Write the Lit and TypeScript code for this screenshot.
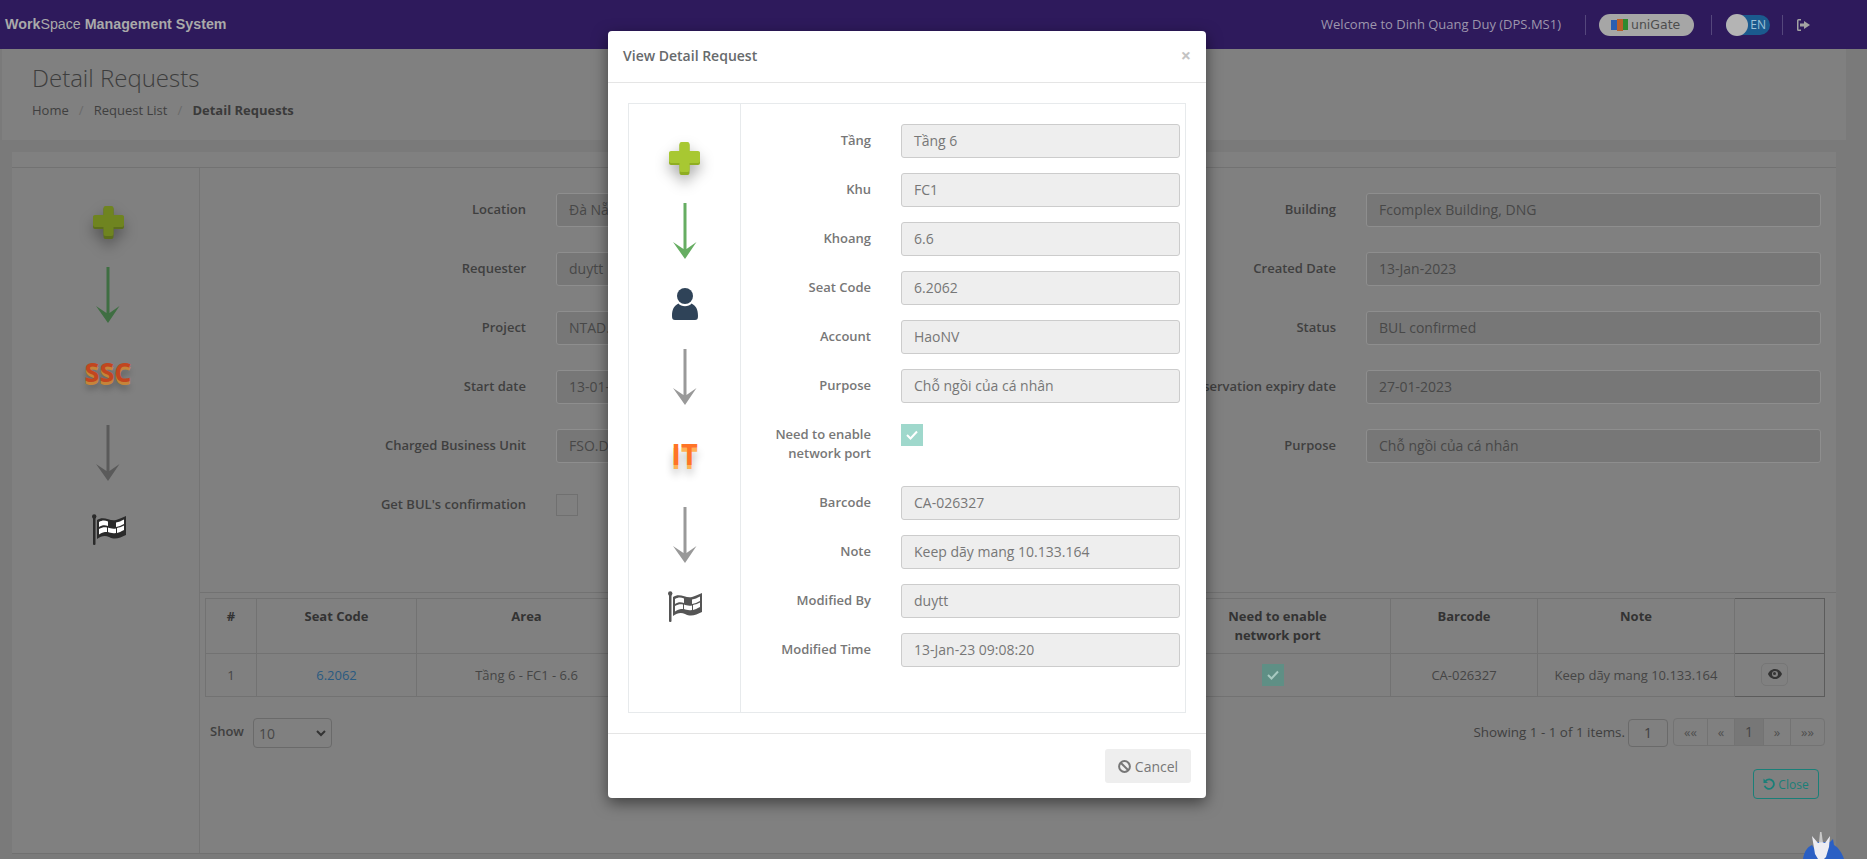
import { LitElement, html, svg, css } from 'lit';
import { customElement } from 'lit/decorators.js';

const plusIcon = (top: string, side: string) => html`
  <svg class="plus" width="31" height="33" viewBox="0 0 31 33">
    <path fill=${side} d="M10.500 3 a2 2 0 0 1 2-2 h6 a2 2 0 0 1 2 2 v7 h8.500 a2 2 0 0 1 2 2 v9 a2 2 0 0 1-2 2 h-8.500 v8 a2 2 0 0 1-2 2 h-6 a2 2 0 0 1-2-2 v-8 H2 a2 2 0 0 1-2-2 v-9 a2 2 0 0 1 2-2 h8.500 z" />
    <path fill=${top} d="M10.500 2 a2 2 0 0 1 2-2 h6 a2 2 0 0 1 2 2 v7 h8.500 a2 2 0 0 1 2 2 v8 a2 2 0 0 1-2 2 h-8.500 v7 a2 2 0 0 1-2 2 h-6 a2 2 0 0 1-2-2 v-7 H2 a2 2 0 0 1-2-2 v-8 a2 2 0 0 1 2-2 h8.500 z" />
  </svg>`;

const arrowIcon = (color: string) => html`
  <svg class="arrow" width="24" height="56" viewBox="0 0 24 56">
    <path fill=${color} d="M10.500 0 h3 v46 l10-7 L12 56 0 39 l10.500 7 z" />
  </svg>`;

const personIcon = () => html`
  <svg class="person" width="26" height="32" viewBox="0 0 26 32">
    <circle cx="13" cy="8" r="8" fill="#2f4358" />
    <path fill="#2f4358" d="M0 28 C0 21 2 18 6.500 15.500 C9 19 17 19 19.500 15.500 C24 18 26 21 26 28 C26 31 25 32 23 32 H3 C1 32 0 31 0 28Z" />
  </svg>`;

const flagIcon = (pole: string, cloth: string) => html`
  <svg class="flag" width="35" height="31" viewBox="0 0 35 31">
    <rect x="2" y="3" width="2.500" height="28" rx="1" fill=${pole} />
    <circle cx="3.200" cy="2.500" r="2.200" fill=${pole} />
    <path fill=${cloth} d="M6 6 C13 1 19 8 25 6 C29 5 32 3 35 2 V21 C29 24 24 26 18 23 C14 21 10 22 6 25 Z" />
    ${[
      'M8 8 C11 6 14 6 17 7.500 L17 12 C14 11 11 11 8 13 Z',
      'M25 8.500 C28 8 30 7 33 5.500 L33 10 C30 11.500 28 12.500 25 13 Z',
      'M17 13.500 C19 14.500 22 15 25 14.500 L25 19 C22 19.500 19 19 17 18 Z',
      'M8 15 C11 13 14 13 16 13.500 L16 18 C13 18 11 18.500 8 20.500 Z',
      'M26 14 C28 13.500 30 13 33 11.500 L33 16 C30 17.500 28 18.500 26 19 Z',
    ].map(d => svg`<path fill="#fff" d=${d} />`)}
  </svg>`;

const checkMark = (color: string) => html`
  <svg width="12" height="10" viewBox="0 0 12 10">
    <path fill="none" stroke=${color} stroke-width="2" d="M1 5 l3.500 3.500 L11 1.500" />
  </svg>`;

@customElement('app-root')
export class AppRoot extends LitElement {
  static styles = css`
    :host {
      display: block;
      position: relative;
      height: 859px;
      overflow: hidden;
      background: #7a7a7a;
      font-family: 'Open Sans', 'Noto Sans', sans-serif;
      font-size: 13px;
      line-height: 19px;
      color: #444;
    }
    * { box-sizing: border-box; }

    .topbar {
      height: 49px;
      background: #2e1a5c;
      display: flex;
      align-items: center;
      padding: 0 57px 0 5px;
    }
    .brand {
      font-family: 'Liberation Sans', Arial, sans-serif;
      font-size: 14.250px;
      font-weight: 700;
      color: #a9a9a9;
      flex: 1;
    }
    .brand span { font-weight: 400; }
    .welcome { color: #9d96ad; font-size: 13px; }
    .sep { width: 1px; height: 20px; background: #55477c; margin: 0 13px 0 24px; }
    .unigate {
      width: 95px;
      height: 22px;
      border-radius: 11px;
      background: #a6a6a6;
      color: #4d4d4d;
      font-family: 'DejaVu Sans', sans-serif;
      font-size: 12.500px;
      display: flex;
      align-items: center;
      gap: 3px;
      padding-left: 12px;
    }
    .sep.b { margin: 0 14px 0 17px; }
    .toggle {
      width: 44px;
      height: 20px;
      border-radius: 10px;
      background: #1b5a8e;
      color: #9ec3da;
      font-size: 12px;
      display: flex;
      align-items: center;
      justify-content: flex-end;
      padding-right: 4px;
      position: relative;
    }
    .knob {
      position: absolute;
      left: 0;
      top: -1px;
      width: 22px;
      height: 22px;
      border-radius: 50%;
      background: #b4b4b4;
    }
    .sep.c { margin: 0 14px 0 12px; }

    .heading {
      height: 91px;
      margin: 0 21px 0 2px;
      background: #808080;
      padding: 14px 30px 0;
    }
    .heading h1 {
      margin: 0;
      font-size: 24px;
      line-height: 30px;
      font-weight: 300;
      color: #3d3d3d;
    }
    .crumbs {
      display: flex;
      margin-top: 8px;
      color: #3f3f3f;
    }
    .crumbs i { font-style: normal; color: #6a6a6a; width: 25px; text-align: center; }
    .crumbs b { color: #3a3a3a; }

    .content { padding: 12px 31px 5px 12px; height: 719px; }
    .card {
      height: 702px;
      background: #808080;
      border-bottom: 1px solid #707070;
      display: flex;
      flex-direction: column;
    }
    .card-top { height: 16px; border-bottom: 1px solid #727272; flex: none; }
    .card-body { display: flex; flex: 1; }
    .steps {
      display: flex;
      flex-direction: column;
      align-items: center;
      flex: none;
      padding-top: 38px;
    }
    .page-steps { width: 188px; padding-left: 5px; border-right: 1px solid #747474; }
    .modal-steps { width: 112px; border-right: 1px solid #e7eaec; }
    .plus { filter: drop-shadow(0 7px 7px rgba(0, 0, 0, 0.32)); }
    .steps .arrow { margin-top: 28px; }
    .steps .word + .arrow { margin-top: 40px; }
    .steps .person + .arrow { margin-top: 29px; }
    .steps .person { margin-top: 29px; }
    .steps .word { margin-top: 36px; font-weight: 700; }
    .page-steps .arrow + .flag { margin-top: 33px; }
    .modal-steps .arrow + .flag { margin-top: 28px; }
    .word.ssc {
      font-size: 27px;
      line-height: 26px;
      color: #c2461f;
      text-shadow: 0 3px 0 #c5843a, 0 7px 6px rgba(0, 0, 0, 0.3);
    }
    .word.it {
      font-size: 29px;
      line-height: 26px;
      color: #ff7426;
      text-shadow: 0 4px 0 #ffb255, 0 9px 8px rgba(0, 0, 0, 0.3);
    }

    .main { flex: 1; display: flex; flex-direction: column; min-width: 0; }
    .fields {
      display: grid;
      grid-template-columns: 810px 810px;
      row-gap: 25px;
      align-content: start;
      height: 425px;
      padding-top: 25px;
      border-bottom: 1px solid #727272;
    }
    .field { display: grid; grid-template-columns: 326px 455px; column-gap: 30px; }
    .field label {
      text-align: right;
      padding-top: 7px;
      font-weight: 600;
      color: #3f3f3f;
    }
    .input {
      height: 34px;
      border: 1px solid #8e8e8e;
      border-radius: 3px;
      background: #777;
      padding: 0 12px;
      font-size: 14px;
      line-height: 32px;
      color: #484848;
      white-space: nowrap;
      overflow: hidden;
    }
    .check {
      width: 22px;
      height: 22px;
      margin-top: 6px;
      border: 1px solid #707070;
    }

    .table-wrap { padding: 5px 10px 0 5px; }
    table {
      width: 1619px;
      table-layout: fixed;
      border-collapse: collapse;
      text-align: center;
      color: #3f3f3f;
    }
    th, td { border: 1px solid #727272; padding: 8px; overflow: hidden; white-space: nowrap; }
    th { vertical-align: top; height: 53px; color: #333; font-weight: 700; white-space: normal; }
    td { height: 43px; padding: 0 8px; color: #454545; }
    th.act, td.act { border: 1px solid #5c5c5c; }
    td a { color: #2a5a80; }
    .tick {
      width: 22px;
      height: 22px;
      background: #5f8f85;
      display: inline-flex;
      align-items: center;
      justify-content: center;
      vertical-align: middle;
    }
    td .tick { margin-right: 10px; }
    .eye {
      width: 27px;
      height: 23px;
      margin: 0 0 2px -10px;
      border: 1px solid #767676;
      border-radius: 5px;
      display: inline-flex;
      align-items: center;
      justify-content: center;
      vertical-align: middle;
    }

    .pager {
      display: flex;
      align-items: flex-start;
      padding: 21px 11px 0 10px;
      color: #3f3f3f;
    }
    .show { display: flex; align-items: center; gap: 9px; font-weight: 600; flex: 1; height: 30px; }
    .show span { margin-top: -3px; }
    .select {
      width: 79px;
      height: 30px;
      border: 1px solid #6a6a6a;
      border-radius: 4px;
      padding: 0 5px;
      font-size: 14px;
      font-weight: 400;
      display: flex;
      align-items: center;
      justify-content: space-between;
      color: #474747;
    }
    .showing { display: flex; align-items: center; height: 29px; font-size: 13.400px; white-space: nowrap; gap: 3px; }
    .page-input {
      width: 40px;
      height: 28px;
      border: 1px solid #6a6a6a;
      border-radius: 4px;
      text-align: center;
      line-height: 26px;
      font-size: 14px;
    }
    .pages {
      display: flex;
      height: 28px;
      margin-left: 5px;
      border: 1px solid #737373;
      border-radius: 4px;
      font-size: 13px;
      line-height: 26px;
      text-align: center;
      color: #4f4f4f;
    }
    .pages span { border-left: 1px solid #737373; }
    .pages span:first-child { border-left: 0; }
    .pages .on { background: #777; color: #444; font-size: 14px; }

    .close-row { display: flex; justify-content: flex-end; padding: 21px 17px 0 0; }
    .close {
      width: 66px;
      height: 30px;
      border: 1px solid #1a7f78;
      border-radius: 4px;
      color: #1a7f78;
      font-size: 12px;
      display: flex;
      align-items: center;
      justify-content: center;
      gap: 3px;
    }

    .modal {
      position: absolute;
      left: 608px;
      top: 31px;
      width: 598px;
      background: #fff;
      border-radius: 4px;
      box-shadow: 0 5px 15px rgba(0, 0, 0, 0.5);
      color: #777;
    }
    .modal-head {
      height: 52px;
      border-bottom: 1px solid #e5e5e5;
      display: flex;
      align-items: center;
      justify-content: space-between;
      padding: 0 15px 2px;
      font-size: 14px;
      font-weight: 600;
      color: #676a6c;
    }
    .x { font-size: 18px; color: #c4c4c4; font-weight: 700; }
    .modal-body { padding: 20px 20px 20px; }
    .box { display: flex; height: 610px; border: 1px solid #e7eaec; }
    .modal-form { flex: 1; padding-top: 20px; display: flex; flex-direction: column; gap: 15px; }
    .row { display: grid; grid-template-columns: 130px 279px; column-gap: 30px; }
    .row label { text-align: right; padding-top: 7px; font-weight: 600; color: #777; }
    .row.tall { height: 53px; }
    .modal .input { background: #eee; border-color: #ccc; color: #777; }
    .row .tick { margin-top: 6px; background: #9fd8cc; }
    .modal-foot {
      height: 65px;
      border-top: 1px solid #e5e5e5;
      padding: 15px;
      display: flex;
      justify-content: flex-end;
    }
    .cancel {
      width: 86px;
      height: 34px;
      background: #eee;
      border-radius: 3px;
      color: #777;
      font-size: 14px;
      display: flex;
      align-items: center;
      justify-content: center;
      gap: 4px;
    }
    .mascot { position: absolute; left: 1803px; top: 830px; }
  `;

  pageFields = [
    ['Location', 'Đà Nẵng', 'Building', 'Fcomplex Building, DNG'],
    ['Requester', 'duytt', 'Created Date', '13-Jan-2023'],
    ['Project', 'NTAD.DPS', 'Status', 'BUL confirmed'],
    ['Start date', '13-01-2023', 'Reservation expiry date', '27-01-2023'],
    ['Charged Business Unit', 'FSO.DPS', 'Purpose', 'Chỗ ngồi của cá nhân'],
  ];

  seatFields = [
    ['Tầng', 'Tầng 6'],
    ['Khu', 'FC1'],
    ['Khoang', '6.6'],
    ['Seat Code', '6.2062'],
    ['Account', 'HaoNV'],
    ['Purpose', 'Chỗ ngồi của cá nhân'],
  ];

  auditFields = [
    ['Barcode', 'CA-026327'],
    ['Note', 'Keep dãy mang 10.133.164'],
    ['Modified By', 'duytt'],
    ['Modified Time', '13-Jan-23 09:08:20'],
  ];

  renderHeader() {
    return html`
      <header class="topbar">
        <div class="brand">Work<span>Space</span> Management System</div>
        <div class="welcome">Welcome to Dinh Quang Duy (DPS.MS1)</div>
        <div class="sep"></div>
        <div class="unigate">
          <svg width="17" height="12" viewBox="0 0 17 12">
            <rect width="6" height="10" y="1" fill="#2b5fb0" />
            <rect x="6" width="6" height="12" fill="#b8602a" />
            <rect x="12" width="5" height="11" fill="#2f8a2f" />
          </svg>
          uniGate
        </div>
        <div class="sep b"></div>
        <div class="toggle"><span class="knob"></span>EN</div>
        <div class="sep c"></div>
        <svg width="13" height="12" viewBox="0 0 13 12">
          <path fill="#a3a3a3" d="M4 0 H1.500 Q0 0 0 1.500 V10.500 Q0 12 1.500 12 H4 V10.500 H1.500 V1.500 H4 Z M7 2 L13 6 L7 10 V7.500 H3 V4.500 H7 Z" />
        </svg>
      </header>
    `;
  }

  renderForm() {
    return html`
      <div class="fields">
        ${this.pageFields.map(f => html`
          <div class="field"><label>${f[0]}</label><div class="input">${f[1]}</div></div>
          <div class="field"><label>${f[2]}</label><div class="input">${f[3]}</div></div>
        `)}
        <div class="field"><label>Get BUL's confirmation</label><div class="check"></div></div>
      </div>
    `;
  }

  renderTable() {
    return html`
      <div class="table-wrap">
        <table>
          <colgroup>
            <col style="width:51px" /><col style="width:160px" /><col style="width:220px" />
            <col style="width:264px" /><col style="width:264px" /><col style="width:226px" />
            <col style="width:147px" /><col style="width:197px" /><col style="width:90px" />
          </colgroup>
          <thead>
            <tr>
              <th>#</th><th>Seat Code</th><th>Area</th><th>Account</th><th>Purpose</th>
              <th>Need to enable<br />network port</th><th>Barcode</th><th>Note</th><th class="act"></th>
            </tr>
          </thead>
          <tbody>
            <tr>
              <td>1</td>
              <td><a>6.2062</a></td>
              <td>Tầng 6 - FC1 - 6.6</td>
              <td>HaoNV</td>
              <td>Chỗ ngồi của cá nhân</td>
              <td><span class="tick">${checkMark('#a8c9c1')}</span></td>
              <td>CA-026327</td>
              <td>Keep dãy mang 10.133.164</td>
              <td class="act">
                <span class="eye">
                  <svg width="14" height="10" viewBox="0 0 14 10">
                    <path fill="#333" fill-rule="evenodd" d="M7 0 C10.500 0 13 2.500 14 5 C13 7.500 10.500 10 7 10 C3.500 10 1 7.500 0 5 C1 2.500 3.500 0 7 0 Z M7 2 A3 3 0 1 0 7 8 A3 3 0 1 0 7 2 Z" />
                    <circle cx="6.500" cy="4.500" r="1.500" fill="#333" />
                  </svg>
                </span>
              </td>
            </tr>
          </tbody>
        </table>
      </div>
    `;
  }

  renderPager() {
    const cells: [string, number][] = [['««', 33], ['«', 27], ['1', 29], ['»', 27], ['»»', 34]];
    return html`
      <div class="pager">
        <div class="show">
          <span>Show</span>
          <div class="select">
            10
            <svg width="10" height="7" viewBox="0 0 10 7">
              <path fill="none" stroke="#333" stroke-width="2" d="M1 1 l4 4 4-4" />
            </svg>
          </div>
        </div>
        <div class="showing">Showing 1 - 1 of 1 items. <div class="page-input">1</div></div>
        <div class="pages">
          ${cells.map(([t, w]) => html`
            <span class=${t === '1' ? 'on' : ''} style="width:${w}px">${t}</span>
          `)}
        </div>
      </div>
      <div class="close-row">
        <div class="close">
          <svg width="12" height="12" viewBox="0 0 12 12">
            <path fill="none" stroke="#1a7f78" stroke-width="1.800" d="M2.600 2.800 A4.800 4.800 0 1 1 1.600 7.800" />
            <path fill="#1a7f78" d="M0.500 0.500 L5 5 H0.500 Z" />
          </svg>
          Close
        </div>
      </div>
    `;
  }

  renderModal() {
    const row = (f: string[]) => html`
      <div class="row"><label>${f[0]}</label><div class="input">${f[1]}</div></div>
    `;
    return html`
      <section class="modal">
        <div class="modal-head">View Detail Request <span class="x">×</span></div>
        <div class="modal-body">
          <div class="box">
            <div class="steps modal-steps">
              ${plusIcon('#a8c832', '#8fae22')}
              ${arrowIcon('#66ad62')}
              ${personIcon()}
              ${arrowIcon('#999')}
              <div class="word it">IT</div>
              ${arrowIcon('#999')}
              ${flagIcon('#555', '#555')}
            </div>
            <div class="modal-form">
              ${this.seatFields.map(row)}
              <div class="row tall">
                <label>Need to enable network port</label>
                <div><span class="tick">${checkMark('#fff')}</span></div>
              </div>
              ${this.auditFields.map(row)}
            </div>
          </div>
        </div>
        <div class="modal-foot">
          <div class="cancel">
            <svg width="13" height="13" viewBox="0 0 13 13">
              <circle cx="6.500" cy="6.500" r="5.400" fill="none" stroke="#777" stroke-width="2" />
              <path stroke="#777" stroke-width="2" d="M2.700 2.700 L10.300 10.300" />
            </svg>
            Cancel
          </div>
        </div>
      </section>
    `;
  }

  render() {
    return html`
      ${this.renderHeader()}
      <div class="heading">
        <h1>Detail Requests</h1>
        <div class="crumbs"><span>Home</span><i>/</i><span>Request List</span><i>/</i><b>Detail Requests</b></div>
      </div>
      <div class="content">
        <div class="card">
          <div class="card-top"></div>
          <div class="card-body">
            <div class="steps page-steps">
              ${plusIcon('#6f8420', '#5c6e1c')}
              ${arrowIcon('#3f6e42')}
              <div class="word ssc">SSC</div>
              ${arrowIcon('#5a5a5a')}
              ${flagIcon('#2b2b2b', '#2b2b2b')}
            </div>
            <div class="main">
              ${this.renderForm()}
              ${this.renderTable()}
              ${this.renderPager()}
            </div>
          </div>
        </div>
      </div>
      ${this.renderModal()}
      <svg class="mascot" width="41" height="29" viewBox="0 0 41 29">
        <path fill="#2a5fc4" d="M0 29 C1 22 4 17 9 15 L11 18 L13 12 L27 12 L30 9 L31 15 C36 18 39 23 41 29 Z" />
        <path fill="#c8c8c8" d="M16 13 L17 2 L18.500 2 L20 13 Z" />
        <path fill="#ececf2" d="M9 6 L15 13 C17 12 20 12 22 13 L27 6 L26 17 L23 27 L21 29 H15 L12 24 Z" />
      </svg>
    `;
  }
}
